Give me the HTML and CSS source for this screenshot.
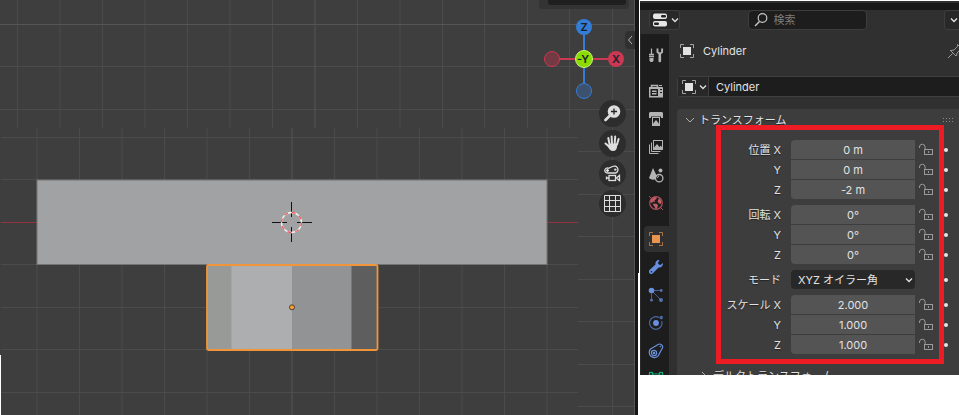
FILE: index.html
```html
<!DOCTYPE html>
<html lang="ja">
<head>
<meta charset="utf-8">
<title>Cylinder</title>
<link rel="stylesheet" href="styles.css">
</head>
<body>
<svg class="defs" width="0" height="0" aria-hidden="true">
  <defs>
    <symbol id="i-object" viewBox="0 0 16 16">
      <rect x="4" y="4" width="8" height="8" fill="currentColor"/>
      <path d="M1.500 5V1.500H5M11 1.500h3.500V5M14.500 11v3.500H11M5 14.500H1.500V11" fill="none" stroke="currentColor" opacity=".65"/>
    </symbol>
    <symbol id="i-down" viewBox="0 0 8 8"><path d="M1 2.500l3 3 3-3" fill="none" stroke="currentColor" stroke-width="1.300"/></symbol>
    <symbol id="i-lock" viewBox="0 0 16 16">
      <path d="M1.500 6V5a2.800 2.800 0 0 1 5.600 0V8" fill="none" stroke="currentColor"/>
      <rect x="6.500" y="7.500" width="8" height="5" fill="none" stroke="currentColor"/>
      <path d="M10 9h1v2h-1z" fill="currentColor"/>
    </symbol>
  </defs>
</svg>
<div class="app">
  <main class="viewport">
    <svg class="scene" role="img" aria-label="3D">
      <rect width="100%" height="100%" fill="#3e3e3e"/>
      <g class="grid">
        <path d="M17.500 0v128M60 0v128M102.500 0v128M145 0v128M187.500 0v128M230 0v128M272.500 0v128M357.500 0v128M400 0v128M442.500 0v128M484.500 0v128M527.500 0v128M569.500 0v128M612.500 0v415M0 66.500h635M0 109.500h635M578 151.500h57M578 194.500h57M578 236.500h57M578 279.500h57M578 321.500h57M578 364.500h57M578 406.500h57"/>
        <path d="M37 128v287M79.500 128v287M122 128v287M164.500 128v287M207 128v287M249.500 128v287M334.500 128v287M377 128v287M419.500 128v287M462 128v287M504.500 128v287M547 128v287M1 137.500h577M1 179.500h577M1 264.500h577M1 307.500h577M1 349.500h577M1 392.500h577"/>
        <path class="major" d="M0 24.500h635M315 0v128M292 128v287M634.500 0v415"/>
      </g>
      <path d="M1 222.500h577" stroke="#92343f"/>
      <rect x="37" y="180" width="510" height="84.500" fill="#a1a2a3" stroke="#737473"/>
      <rect x="207" y="265" width="25" height="85" fill="#989a98"/>
      <rect x="231.500" y="265" width="60.500" height="85" fill="#adaeb0"/>
      <rect x="292" y="265" width="60" height="85" fill="#929395"/>
      <rect x="351.500" y="265" width="25.500" height="85" fill="#5e5e5e"/>
      <rect x="207" y="265" width="170.500" height="85" rx="1.500" fill="none" stroke="#f0953a" stroke-width="1.800"/>
      <path d="M272 222.500h15M297 222.500h15M291.500 202v15M291.500 227v15" stroke="#111"/>
      <circle cx="291.500" cy="222.500" r="10" fill="none" stroke="#f2f2f2" stroke-width="1.300"/>
      <circle cx="291.500" cy="222.500" r="10" fill="none" stroke="#f05a5a" stroke-width="1.300" stroke-dasharray="3.927 3.927"/>
      <circle cx="292" cy="307.300" r="2.500" fill="#ff9d2c" stroke="#45403b"/>
    </svg>

    <div class="view-options"><div class="view-options-field"></div></div>

    <svg class="gizmo" width="82" height="82" viewBox="0 0 82 82" role="img" aria-label="-Y">
      <path d="M9 41h64" stroke="#cb3852" stroke-width="2"/>
      <path d="M41 9v64" stroke="#347dd6" stroke-width="2"/>
      <circle cx="9" cy="41" r="7.500" fill="#733a44" stroke="#cb3852"/>
      <circle cx="41" cy="73" r="7.500" fill="#3c526e" stroke="#347dd6"/>
      <circle cx="41" cy="9" r="8" fill="#347dd6"/>
      <circle cx="73" cy="41" r="8" fill="#cb3852"/>
      <circle cx="41" cy="41" r="8.500" fill="#8bdc00" stroke="#caf47c"/>
      <text x="41" y="13">Z</text>
      <text x="73" y="45">X</text>
      <text x="40" y="45">-Y</text>
    </svg>

    <button class="sidebar-toggle" type="button" aria-label="サイドバー">
      <svg width="8" height="10" viewBox="0 0 8 10"><path d="M6 1L2.500 5 6 9" fill="none" stroke="#b8b8b8"/></svg>
    </button>

    <div class="nav-tools">
      <button type="button" aria-label="ズーム">
        <svg width="17" height="17" viewBox="0 0 17 17"><circle cx="10" cy="6.500" r="6.300" fill="#dedede"/><path d="M5.500 11L1.500 15" stroke="#dedede" stroke-width="2.600" stroke-linecap="round"/><path d="M10 3.500v6M7 6.500h6" stroke="#222" stroke-width="1.300"/></svg>
      </button>
      <button type="button" aria-label="移動">
        <svg width="17" height="17" viewBox="0 0 17 17" fill="none" stroke="#dedede" stroke-width="2" stroke-linecap="round"><path d="M5.500 9L4.300 3M8 8.500L7.600 1.500M10.700 8.500l.5-7M13 9.500l1.600-5.500M5.500 12L1.500 8.500"/><path d="M5 8.500h8.500l-.5 3.500c-.4 2.500-1.500 4-4 4s-3.500-1.500-5-4z" fill="#dedede" stroke="none"/></svg>
      </button>
      <button type="button" aria-label="カメラ">
        <svg width="17" height="17" viewBox="0 0 17 17" fill="none" stroke="#dedede" stroke-width="1.300"><path d="M3.500 8A2.500 2.500 0 1 1 4.500 3.300L8.500 1.500A3.300 3.300 0 1 1 12 8z"/><circle cx="11.300" cy="4.600" r="1.200" fill="#dedede" stroke="none"/><path d="M2 5.500h3M3.500 4v3"/><rect x="5" y="10.500" width="6.500" height="5"/><path d="M2.500 11.500v3M2.500 13H5M15.500 10.500v5l-3-2.500z"/></svg>
      </button>
      <button type="button" aria-label="グリッド">
        <svg width="17" height="17" viewBox="0 0 17 17" fill="none" stroke="#dedede"><path d="M.5.500h16v16H.5zM5.500.500v16M11.500.500v16M.5 5.500h16M.5 11.500h16"/></svg>
      </button>
    </div>
  </main>

  <aside class="editor">
    <header class="editor-head">
      <button class="editor-type" type="button" aria-label="プロパティ">
        <svg width="16" height="16" viewBox="0 0 16 16"><rect x="1" y="1.500" width="14" height="5.500" rx="2" fill="#e6e6e6"/><rect x="9" y="3" width="5" height="2.500" rx="1.200" fill="#222"/><rect x="1" y="9" width="14" height="5.500" rx="2" fill="#e6e6e6"/><rect x="2" y="10.500" width="5" height="2.500" rx="1.200" fill="#222"/></svg>
        <svg width="8" height="8"><use href="#i-down"/></svg>
      </button>
      <label class="search">
        <svg width="16" height="16" viewBox="0 0 16 16" fill="none" stroke="#c8c8c8"><circle cx="9.500" cy="6" r="4.300" stroke-width="1.200"/><path d="M6.500 9.500L2 14" stroke-width="1.500"/></svg>
        <input type="search" placeholder="検索" aria-label="検索">
      </label>
      <button class="options" type="button" aria-label="オプション"><svg width="8" height="8"><use href="#i-down"/></svg></button>
    </header>

    <div class="editor-body">
      <nav class="tabs">
        <div class="tab-group">
          <button type="button" aria-label="ツール"><svg width="16" height="16" viewBox="0 0 16 16" fill="none" stroke="#b4b4b4"><path d="M3.500 1.500v6" stroke-width="1.200"/><path d="M1 7.500h5M1 9.500h5" stroke-width="1.300"/><path d="M1.500 11h4v2.500l-1 1.500h-2l-1-1.500z" fill="#b4b4b4" stroke="none"/><path d="M9.500 1.500V5l2.300 2 2.300-2V1.500" stroke-width="1.900"/><path d="M11.800 7v7" stroke-width="2.600" stroke-linecap="round"/></svg></button>
        </div>
        <div class="tab-group">
          <button type="button" aria-label="レンダー"><svg width="16" height="16" viewBox="0 0 16 16"><path d="M3.500 4V2.500h6V4" fill="none" stroke="#b4b4b4" stroke-width="1.500"/><path d="M1 4h13a1 1 0 0 1 1 1v9.500H1z" fill="#b4b4b4"/><path d="M2.500 6h7.500v7H2.500z" fill="#1d1d1d"/><path d="M4 7.500h4.500v4H4z" fill="#b4b4b4"/><path d="M4 9.500h4.500" stroke="#1d1d1d"/><path d="M12 6.500h2M12 9.500h2" stroke="#1d1d1d" stroke-width="1.200"/><path d="M11 2.500h3" stroke="#b4b4b4"/></svg></button>
          <button type="button" aria-label="出力"><svg width="16" height="16" viewBox="0 0 16 16"><path d="M2 1h12l1 1v5h-2V5.500H3V7H1V2z" fill="#b4b4b4"/><rect x="4.500" y="6.500" width="7" height="8" fill="none" stroke="#b4b4b4"/><path d="M5 14v-1.500L8 9l3 3.500V14z" fill="#b4b4b4"/></svg></button>
          <button type="button" aria-label="ビューレイヤー"><svg width="16" height="16" viewBox="0 0 16 16" fill="none" stroke="#b4b4b4"><rect x="5.500" y="1.500" width="9" height="9"/><path d="M3.500 3.500v9h9M1.500 5.500v9h9"/><path d="M6 10V8.500L9 5l2.500 3L13 6.500l1 2V10z" fill="#b4b4b4" stroke="none"/></svg></button>
          <button type="button" aria-label="シーン"><svg width="16" height="16" viewBox="0 0 16 16"><path d="M5 1l4 8.500c-1.500.5-2 1.500-2 3C4 13 1.500 12 1 11z" fill="#b4b4b4"/><circle cx="12.500" cy="3.500" r="2" fill="#b4b4b4"/><circle cx="11.200" cy="11.200" r="3.700" fill="none" stroke="#b4b4b4" stroke-width="1.300"/><path d="M9.500 11a2 2 0 0 1 1.500-2" fill="none" stroke="#b4b4b4"/></svg></button>
          <button type="button" aria-label="ワールド"><svg width="16" height="16" viewBox="0 0 16 16"><circle cx="8" cy="8" r="6.300" fill="none" stroke="#a8515a" stroke-width="1.200"/><path d="M1 1l2.500 2.500M12.500 12.500L15 15" stroke="#a8515a"/><path d="M3 4.500L6.500 2l2.500.5-1 2-1.500.5L7 7 5 6.500 4 8 2.200 7zM11 3l2.500 3-.5 3-2-.5-1.500-2zM5.500 8.500L9 9l1 1.500-1 3-1.500.500-1-2.500L5 10z" fill="#c35a65"/></svg></button>
        </div>
        <div class="tab-group">
          <button class="active" type="button" aria-label="オブジェクト"><svg class="orange" width="16" height="16"><use href="#i-object"/></svg></button>
          <button type="button" aria-label="モディファイアー"><svg width="16" height="16" viewBox="0 0 16 16"><path d="M11.500 1c-2.500-.2-4.500 1.800-4 4.500L1.500 11c-1 1.500-.5 3 .5 3.700 1.200.7 2.500.3 3.200-.7L10.500 8.500c2.500.5 4.800-1.500 4.500-4.500L12 6.200 9.800 4.200z" fill="#668fe0"/><circle cx="3.500" cy="12.700" r=".8" fill="#1d1d1d"/></svg></button>
          <button type="button" aria-label="パーティクル"><svg width="16" height="16" viewBox="0 0 16 16" fill="#6a90dc"><path d="M3.500 3.500H13M3.500 3.500V13M3.500 3.500l9.500 9.500" stroke="#445c8e"/><circle cx="3.500" cy="3.500" r="2.800"/><circle cx="13.200" cy="3.500" r="1.400" fill="#5572ab"/><circle cx="3.500" cy="13.200" r="1.400" fill="#5572ab"/><circle cx="13" cy="13" r="2" fill="#5572ab"/></svg></button>
          <button type="button" aria-label="物理演算"><svg width="16" height="16" viewBox="0 0 16 16"><path d="M11 2.600a6.300 6.300 0 1 0 2.800 3.500" fill="none" stroke="#4c68a2" stroke-width="1.200"/><circle cx="8" cy="8" r="2.900" fill="#6a90e0"/><circle cx="13.200" cy="2.600" r="1.800" fill="#4c68a2"/></svg></button>
          <button type="button" aria-label="コンストレイント"><svg width="16" height="16" viewBox="0 0 16 16" fill="none" stroke="#6a90dc" stroke-width="1.200"><path d="M2.500 6L10.500 1.300c2-1 4.700 1 4 3.500l-4.300 8A5 5 0 1 1 2.500 6z"/><circle cx="6" cy="10" r="2.600"/><circle cx="6" cy="10" r=".7" fill="#6a90dc"/><circle cx="12.300" cy="3.500" r=".8" fill="#6a90dc" stroke="none"/></svg></button>
          <button type="button" aria-label="データ"><svg width="16" height="16" viewBox="0 0 16 16" fill="none" stroke="#14a87c" stroke-width="1.200"><path d="M4 3h8M4 13h8M3 4v8M13 4v8"/><rect x="1.500" y="1.500" width="3" height="3"/><rect x="11.500" y="1.500" width="3" height="3"/><rect x="1.500" y="11.500" width="3" height="3"/><rect x="11.500" y="11.500" width="3" height="3"/></svg></button>
        </div>
      </nav>

      <div class="properties">
        <div class="crumb">
          <svg width="16" height="16"><use href="#i-object"/></svg>
          <span>Cylinder</span>
          <button class="pin" type="button" aria-label="ピン"><svg width="16" height="16" viewBox="0 0 16 16" fill="none" stroke="#969696"><path d="M1 15l4.500-4.500M3 7l6 6M4 7.500l3-.5 3.500-3.500V1.500l5 5h-2L10 10l-.5 3"/></svg></button>
        </div>
        <div class="datablock">
          <button type="button" aria-label="オブジェクト選択"><svg width="16" height="16"><use href="#i-object"/></svg><svg width="8" height="8"><use href="#i-down"/></svg></button>
          <input type="text" value="Cylinder" aria-label="名前">
        </div>

        <section class="panel">
          <h2 class="panel-head">
            <svg width="10" height="10" viewBox="0 0 10 10"><path d="M1 3l4 4 4-4" fill="none" stroke="#b0b0b0"/></svg>
            <span>トランスフォーム</span>
            <svg class="grip" width="12" height="4" viewBox="0 0 12 4"><path d="M0 .5h12M0 3.500h12" stroke="#8a8a8a" stroke-dasharray="1 2"/></svg>
          </h2>
          <div class="fields">
            <div class="group">
              <div class="row"><label for="px">位置 X</label><input id="px" type="text" value="0 m"><svg class="lock" width="16" height="16"><use href="#i-lock"/></svg><i class="dot"></i></div>
              <div class="row"><label for="py">Y</label><input id="py" type="text" value="0 m"><svg class="lock" width="16" height="16"><use href="#i-lock"/></svg><i class="dot"></i></div>
              <div class="row"><label for="pz">Z</label><input id="pz" type="text" value="-2 m"><svg class="lock" width="16" height="16"><use href="#i-lock"/></svg><i class="dot"></i></div>
            </div>
            <div class="group">
              <div class="row"><label for="rx">回転 X</label><input id="rx" type="text" value="0°"><svg class="lock" width="16" height="16"><use href="#i-lock"/></svg><i class="dot"></i></div>
              <div class="row"><label for="ry">Y</label><input id="ry" type="text" value="0°"><svg class="lock" width="16" height="16"><use href="#i-lock"/></svg><i class="dot"></i></div>
              <div class="row"><label for="rz">Z</label><input id="rz" type="text" value="0°"><svg class="lock" width="16" height="16"><use href="#i-lock"/></svg><i class="dot"></i></div>
            </div>
            <div class="row">
              <label for="mode">モード</label>
              <span class="select"><select id="mode"><option>XYZ オイラー角</option></select><svg width="8" height="8"><use href="#i-down"/></svg></span>
              <span></span><i class="dot"></i>
            </div>
            <div class="group">
              <div class="row"><label for="sx">スケール X</label><input id="sx" type="text" value="2.000"><svg class="lock" width="16" height="16"><use href="#i-lock"/></svg><i class="dot"></i></div>
              <div class="row"><label for="sy">Y</label><input id="sy" type="text" value="1.000"><svg class="lock" width="16" height="16"><use href="#i-lock"/></svg><i class="dot"></i></div>
              <div class="row"><label for="sz">Z</label><input id="sz" type="text" value="1.000"><svg class="lock" width="16" height="16"><use href="#i-lock"/></svg><i class="dot"></i></div>
            </div>
            <div class="highlight"></div>
          </div>
          <h3 class="subpanel-head">
            <svg width="10" height="10" viewBox="0 0 10 10"><path d="M3 1l4 4-4 4" fill="none" stroke="#b0b0b0"/></svg>
            <span>デルタトランスフォーム</span>
          </h3>
        </section>
      </div>
    </div>
  </aside>
</div>
</body>
</html>
```
FILE: styles.css
```css
* {
  box-sizing: border-box;
}

body {
  margin: 0;
  background: #fff;
  color: #e2e2e2;
  font: 11px/16px Inter, "Noto Sans CJK JP", sans-serif;
  overflow: hidden;
}

button,
input,
select {
  margin: 0;
  padding: 0;
  border: 0;
  background: none;
  color: inherit;
  font: inherit;
}

svg {
  display: block;
  flex: none;
}

.defs {
  position: absolute;
}

.app {
  display: grid;
  grid-template-columns: minmax(0, 2fr) minmax(320px, 1fr);
  height: 100vh;
}

/* 3D viewport */

.viewport {
  position: relative;
  padding-right: 4px;
  background: #161616;
  overflow: hidden;
}

.viewport::before,
.viewport::after {
  content: "";
  position: absolute;
  bottom: 0;
  width: 1px;
  background: #fff;
}

.viewport::before {
  left: 0;
  height: 60px;
}

.viewport::after {
  right: 0;
  height: 142px;
}

.scene {
  width: 100%;
  height: 100%;
}

.grid {
  fill: none;
  stroke: #4b4b4b;
}

.grid .major {
  stroke: #555;
}

.view-options {
  position: absolute;
  top: 0;
  right: 10px;
  width: 90px;
  height: 9px;
  padding: 0 3px 0 9px;
  border-radius: 0 0 4px 4px;
  background: #333;
}

.view-options-field {
  height: 5px;
  border-radius: 0 0 3px 3px;
  background: #1f1f1f;
}

.gizmo {
  position: absolute;
  top: 18px;
  right: 14px;
}

.gizmo text {
  fill: #18202a;
  font-size: 11px;
  font-weight: 600;
  text-anchor: middle;
}

.sidebar-toggle {
  position: absolute;
  top: 31px;
  right: 4px;
  display: grid;
  place-items: center;
  width: 10px;
  height: 18px;
  border-radius: 4px 0 0 4px;
  background: #303030;
}

.nav-tools {
  position: absolute;
  top: 100px;
  right: 13px;
  display: grid;
  gap: 3px;
}

.nav-tools button {
  display: grid;
  place-items: center;
  width: 27px;
  height: 27px;
  border-radius: 50%;
  background: #2d2d2d;
}

/* Properties editor */

.editor {
  display: flex;
  flex-direction: column;
  height: calc(100vh - 40px);
  border-top: 1px solid #fff;
  border-left: 1px solid #fff;
  background: #303030;
  overflow: hidden;
}

.editor::before {
  content: "";
  flex: none;
  height: 7px;
  border-top: 2px solid #2e302f;
  background: #181818;
}

.editor-head {
  display: flex;
  flex: none;
  align-items: center;
  justify-content: space-between;
  height: 24px;
  padding: 0 0 4px 9px;
}

.editor-head button,
.search {
  display: flex;
  align-items: center;
  height: 20px;
  border: 1px solid #3d3d3d;
  border-radius: 4px;
  background: #282828;
}

.editor-type {
  gap: 3px;
  width: 31px;
  padding-left: 2px;
}

.editor-head .search {
  gap: 5px;
  width: 119px;
  margin-right: 10px;
  padding-left: 4px;
  background: #1d1d1d;
}

.search input {
  width: 100%;
  min-width: 0;
  outline: 0;
}

.search input::placeholder {
  color: #7c7c7c;
  opacity: 1;
}

.editor-head .options {
  width: 15px;
  padding-left: 5px;
  border-right: 0;
  border-radius: 4px 0 0 4px;
}

.editor-body {
  display: flex;
  flex: 1;
  min-height: 0;
}

.tabs {
  flex: none;
  width: 29px;
  padding: 8px 0 0 3px;
  border-left: 1px solid #2a2a2a;
  background: #1d1d1d;
}

.tab-group {
  display: grid;
  gap: 2px;
  margin-bottom: 10px;
}

.tabs button {
  display: flex;
  align-items: center;
  height: 26px;
  padding-left: 4px;
  border-radius: 4px 0 0 4px;
}

.tabs .active {
  background: #303030;
}

.orange {
  color: #e8964f;
}

.properties {
  flex: 1;
  min-width: 0;
  padding: 7px 0 0 8px;
}

.crumb {
  display: flex;
  align-items: center;
  gap: 8px;
  height: 20px;
  padding-left: 2px;
}

.pin {
  width: 12px;
  margin-left: auto;
}

.datablock {
  display: flex;
  height: 21px;
  margin: 15px 0 12px;
  border: 1px solid #3f3f3f;
  border-right: 0;
  border-radius: 4px 0 0 4px;
  background: #1d1d1d;
}

.datablock button {
  display: flex;
  align-items: center;
  gap: 2px;
  width: 31px;
  padding-left: 3px;
  border-right: 1px solid #3f3f3f;
  background: #282828;
}

.datablock input {
  flex: 1;
  min-width: 0;
  padding-left: 7px;
}

.panel {
  height: 100%;
  border-radius: 4px 0 0;
  background: #3d3d3d;
}

.panel-head,
.subpanel-head {
  display: flex;
  align-items: center;
  gap: 4px;
  height: 22px;
  margin: 0;
  font: inherit;
  text-shadow: 0 1px 1px #222;
}

.panel-head {
  padding: 0 4px 0 8px;
}

.grip {
  margin-left: auto;
}

.subpanel-head {
  padding-left: 22px;
}

.fields {
  position: relative;
  display: grid;
  gap: 6px;
  padding: 9px 11px 11px 0;
}

.group {
  display: grid;
  gap: 1px;
}

.row {
  display: grid;
  grid-template-columns: minmax(0, 1fr) 124px 23px 4px;
  column-gap: 3px;
  align-items: center;
  height: 19px;
  text-shadow: 0 1px 1px #222;
}

.row label {
  padding-right: 7px;
  text-align: right;
  white-space: nowrap;
}

.row input {
  height: 19px;
  background: #545454;
  text-align: center;
}

.group .row:first-child input {
  border-top-left-radius: 4px;
}

.group .row:last-child input {
  border-bottom-left-radius: 4px;
}

.lock {
  color: #9a9a9a;
}

.dot {
  width: 4px;
  height: 4px;
  border-radius: 50%;
  background: #e6e6e6;
}

.select {
  position: relative;
  display: block;
}

.select select {
  width: 100%;
  height: 19px;
  padding-left: 7px;
  border-radius: 4px;
  background: #282828;
  appearance: none;
}

.select svg {
  position: absolute;
  top: 6px;
  right: 2px;
  pointer-events: none;
}

.highlight {
  position: absolute;
  inset: -6px 15px 1px 39px;
  border: 5px solid #ed1c24;
  pointer-events: none;
}
```
